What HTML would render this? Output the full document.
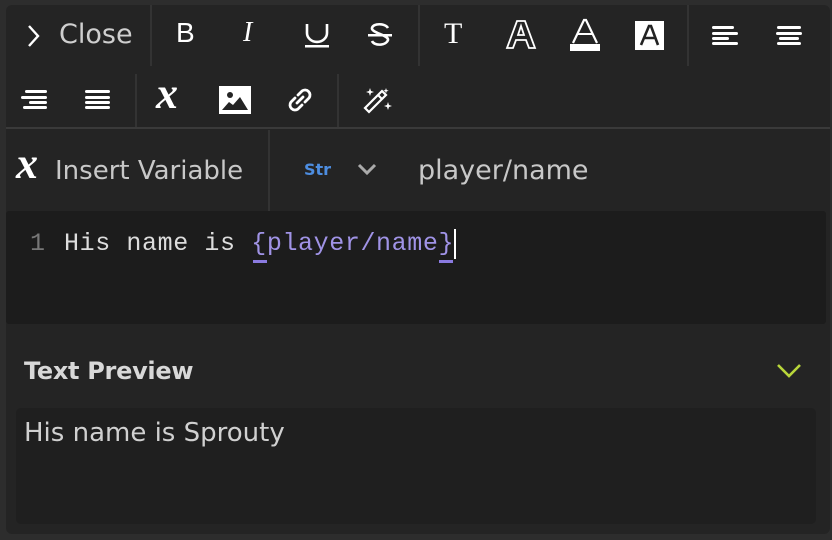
<!DOCTYPE html>
<html><head><meta charset="utf-8"><style>
*{box-sizing:border-box;margin:0;padding:0}
body{width:832px;height:540px;background:#2d2d2d;font-family:"DejaVu Sans","Liberation Sans",sans-serif;overflow:hidden;position:relative;color:#ddd}
.panel{position:absolute;left:6px;top:5px;width:824px;height:529px;background:#242424;border-radius:6px}
.ico{position:absolute;color:#fff}
.vs{position:absolute;width:2px;background:#333}
.abs{position:absolute}
</style></head><body>
<div class="panel"></div>
<!-- row1 -->
<svg class="ico" style="left:26px;top:24px" width="16" height="24" viewBox="0 0 16 24"><path d="M3 2 L12 12 L3 22" stroke="#fff" stroke-width="2.4" fill="none"/></svg>
<div class="abs" style="left:59px;top:19px;font-size:27px;color:#cfcfcf">Close</div>
<div class="vs" style="left:150px;top:5px;height:61px"></div>
<div class="abs" style="left:176px;top:17px;font-size:28px;color:#fff;font-family:'Liberation Sans'">B</div>
<div class="abs" style="left:243px;top:17px;font-size:28px;color:#fff;font-style:italic;font-family:'Liberation Serif'">I</div>
<svg class="ico" style="left:304px;top:22px" width="26" height="26"><path d="M3 2 V11 a9 8 0 0 0 20 0 V2" stroke="#fff" stroke-width="2.6" fill="none"/><rect x="1" y="23" width="24" height="2.5" fill="#fff"/></svg>
<svg class="ico" style="left:367px;top:22px" width="26" height="26"><path d="M21 6 C18 1 6 1 5 6 C4 11 22 13 21 18 C19 24 7 24 5 19" stroke="#fff" stroke-width="2.6" fill="none"/><rect x="1" y="12" width="24" height="2.5" fill="#fff"/></svg>
<div class="vs" style="left:418px;top:5px;height:61px"></div>
<div class="abs" style="left:444px;top:17px;font-size:30px;color:#fff;font-family:'Liberation Serif'">T</div>
<svg class="ico" style="left:505px;top:19px" width="32" height="32"><path d="M2 29 L12 2 H20 L30 29 H24 L21 21 H11 L8 29 Z M13 16 H19 L16 7 Z" stroke="#fff" stroke-width="1.8" fill="none"/></svg>
<svg class="ico" style="left:569px;top:18px" width="32" height="34"><path d="M4 25 L15 2 H17 L28 25" stroke="#fff" stroke-width="2.2" fill="none"/><path d="M9 16 H23" stroke="#fff" stroke-width="2"/><rect x="1" y="26" width="30" height="7" fill="#fff"/></svg>
<svg class="ico" style="left:635px;top:21px" width="29" height="29"><rect width="29" height="29" fill="#fff"/><path d="M6 24 L14 5 H16 L23 24 M9.5 17 H20" stroke="#222" stroke-width="2.6" fill="none"/></svg>
<div class="vs" style="left:687px;top:5px;height:61px"></div>
<svg class="ico" style="left:712px;top:26px" width="28" height="20"><g fill="#fff"><rect y="0" width="22" height="3" rx="1.5"/><rect y="6" width="26" height="3" rx="1.5"/><rect y="11" width="17" height="3" rx="1.5"/><rect y="16" width="26" height="3" rx="1.5"/></g></svg>
<svg class="ico" style="left:776px;top:26px" width="28" height="20"><g fill="#fff"><rect x="1" y="0" width="24" height="3" rx="1.5"/><rect x="0" y="6" width="26" height="3" rx="1.5"/><rect x="3" y="11" width="20" height="3" rx="1.5"/><rect x="1" y="16" width="24" height="3" rx="1.5"/></g></svg>
<!-- row2 -->
<svg class="ico" style="left:21px;top:90px" width="28" height="20"><g fill="#fff"><rect x="4" y="0" width="22" height="3" rx="1.5"/><rect x="0" y="6" width="26" height="3" rx="1.5"/><rect x="8" y="11" width="18" height="3" rx="1.5"/><rect x="2" y="16" width="24" height="3" rx="1.5"/></g></svg>
<svg class="ico" style="left:85px;top:90px" width="28" height="20"><g fill="#fff"><rect y="0" width="25" height="3" rx="1.5"/><rect y="6" width="25" height="3" rx="1.5"/><rect y="11" width="25" height="3" rx="1.5"/><rect y="16" width="25" height="3" rx="1.5"/></g></svg>
<div class="vs" style="left:135px;top:74px;height:53px"></div>
<div class="abs" style="left:156px;top:72px;font-size:44px;line-height:44px;font-weight:bold;font-style:italic;color:#fff;font-family:'Liberation Serif'">x</div>
<svg class="ico" style="left:219px;top:86px" width="32" height="28"><rect width="32" height="28" fill="#fff"/><circle cx="11" cy="9" r="3" fill="#242424"/><path d="M3 24 L10 16 L14 19 L21 11 L29 24 Z" fill="#242424"/></svg>
<svg class="ico" style="left:286px;top:86px" width="28" height="28"><g stroke="#fff" stroke-width="2.8" fill="none" stroke-linecap="round"><path d="M12 9 L16 5 a5 5 0 0 1 7 7 L19 16"/><path d="M16 19 L12 23 a5 5 0 0 1 -7 -7 L9 12"/><path d="M11 17 L17 11"/></g></svg>
<div class="vs" style="left:337px;top:74px;height:53px"></div>
<svg class="ico" style="left:362px;top:86px" width="30" height="28"><g stroke="#fff" stroke-width="2.2" fill="none"><path d="M3 22 L20 5 L24 9 L7 26 Z"/><path d="M16 9 L20 13"/></g><g fill="#fff"><path d="M8 2 l1 3 3 1 -3 1 -1 3 -1 -3 -3 -1 3 -1z"/><path d="M26 16 l1 3 3 1 -3 1 -1 3 -1 -3 -3 -1 3 -1z"/><path d="M24 2 l.7 2 2 .7 -2 .7 -.7 2 -.7 -2 -2 -.7 2 -.7z"/></g></svg>
<div class="abs" style="left:6px;top:127px;width:824px;height:2px;background:#3a3a3a"></div>
<!-- row3 -->
<div class="abs" style="left:16px;top:142px;font-size:44px;line-height:44px;font-weight:bold;font-style:italic;color:#fff;font-family:'Liberation Serif'">x</div>
<div class="abs" style="left:55px;top:156px;font-size:26px;color:#c8c8c8">Insert Variable</div>
<div class="vs" style="left:268px;top:130px;height:81px"></div>
<div class="abs" style="left:304px;top:160px;font-size:16px;font-weight:bold;color:#4d8de0">Str</div>
<svg class="ico" style="left:357px;top:163px" width="20" height="14"><path d="M2 2 L10 10 L18 2" stroke="#aaa" stroke-width="3" fill="none"/></svg>
<div class="abs" style="left:418px;top:155px;font-size:27px;color:#c8c8c8">player/name</div>
<!-- editor -->
<div class="abs" style="left:6px;top:211px;width:820px;height:113px;background:#1c1c1c;border-radius:3px"></div>
<div class="abs" style="left:30px;top:229px;font-family:'Liberation Mono',monospace;font-size:25px;color:#777">1</div>
<div class="abs" style="left:64px;top:229px;font-family:'Liberation Mono',monospace;font-size:25px;letter-spacing:0.6px;white-space:pre;color:#ddd">His name is <span style="color:#a093e6">{player/name}</span></div>
<div class="abs" style="left:253px;top:260px;width:14px;height:3px;background:#8a7ae0"></div>
<div class="abs" style="left:439px;top:260px;width:14px;height:3px;background:#8a7ae0"></div>
<div class="abs" style="left:454px;top:229px;width:2px;height:30px;background:#fff"></div>
<!-- preview -->
<div class="abs" style="left:24px;top:357px;font-size:24px;font-weight:bold;color:#d8d8d8;letter-spacing:-0.3px">Text Preview</div>
<svg class="ico" style="left:776px;top:363px" width="26" height="16"><path d="M2 2 L13 13 L24 2" stroke="#b8d63a" stroke-width="2.6" fill="none"/></svg>
<div class="abs" style="left:16px;top:408px;width:800px;height:116px;background:#1f1f1f;border-radius:5px"></div>
<div class="abs" style="left:24px;top:418px;font-size:26px;color:#d0d0d0">His name is Sprouty</div>
</body></html>
